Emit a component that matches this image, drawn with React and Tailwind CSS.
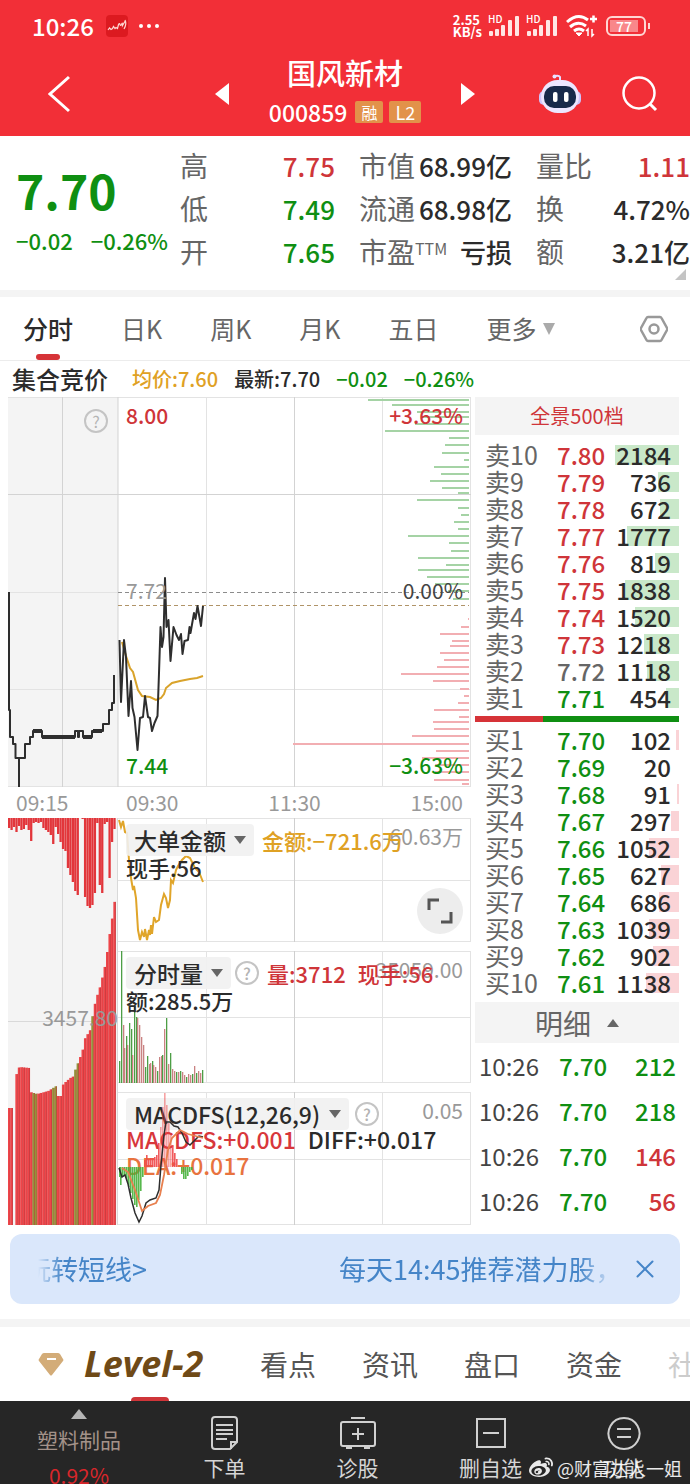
import { X } from 'lucide-react';
import { FaWeibo } from 'react-icons/fa';

const sells = [
  [10, '7.80', 2184], [9, '7.79', 736], [8, '7.78', 672], [7, '7.77', 1777], [6, '7.76', 819],
  [5, '7.75', 1838], [4, '7.74', 1520], [3, '7.73', 1218], [2, '7.72', 1118], [1, '7.71', 454],
];
const buys = [
  [1, '7.70', 102], [2, '7.69', 20], [3, '7.68', 91], [4, '7.67', 297], [5, '7.66', 1052],
  [6, '7.65', 627], [7, '7.64', 686], [8, '7.63', 1039], [9, '7.62', 902], [10, '7.61', 1138],
];
const trades = [
  ['10:26', '7.70', 212, true], ['10:26', '7.70', 218, true],
  ['10:26', '7.70', 146, false], ['10:26', '7.70', 56, false],
];
const PREV_CLOSE = 7.72;

const priceColor = (p) => {
  if (Number(p) > PREV_CLOSE) return 'text-[#cf3539]';
  return Number(p) < PREV_CLOSE ? 'text-[#0f8f12]' : 'text-[#666]';
};

// [y, bar length] of the resting orders at each price
const asks = [
  [400, 101], [405, 77], [412, 52], [417, 48], [424, 54], [431, 84], [438, 20], [445, 24], [453, 27], [460, 5],
  [467, 35], [474, 28], [481, 39], [488, 27], [493, 11], [500, 52], [508, 11], [515, 8], [522, 15], [529, 11],
  [536, 61], [543, 20], [551, 18], [558, 51], [565, 23], [570, 51], [577, 42], [584, 34], [591, 21], [599, 16],
];
const bids = [
  [619, 1], [627, 8], [634, 29], [641, 17], [646, 19], [653, 29], [660, 25], [667, 32], [674, 68], [681, 36],
  [689, 9], [696, 5], [703, 11], [710, 35], [717, 10], [722, 36], [729, 35], [736, 57], [744, 176], [751, 33],
  [758, 47], [765, 34], [772, 34], [780, 35], [784, 7],
];

// outlines of the call auction volume
const auctionTop = [
  [8, 1108], [12, 1108], [13, 1092], [16, 1075], [19, 1067], [29, 1068], [30, 1092], [37, 1094], [48, 1091], [56, 1086],
  [57, 1096], [61, 1096], [63, 1084], [70, 1078], [74, 1076], [75, 1070], [82, 1052], [85, 1038], [90, 1030],
  [93, 1012], [96, 998], [99, 990], [102, 978], [105, 965], [107, 952], [110, 930], [113, 912], [115, 897],
];
const auctionDrop = [
  10, 12, 9, 14, 8, 12, 11, 7, 12, 23, 5, 4, 5, 4, 10, 12, 14, 17, 26, 9, 16, 24, 31, 33, 50, 57, 64, 73, 77, 0, 1, 79,
  88, 90, 87, 75, 5, 67, 75, 6, 4, 60, 24, 11,
];
const greenBars = [10, 11, 18, 19, 27, 28, 34];

const topAt = (x) => {
  const i = auctionTop.findIndex(([px]) => px >= x);
  if (i < 1) return auctionTop[0][1];
  const [x0, y0] = auctionTop[i - 1];
  const [x1, y1] = auctionTop[i];
  return y0 + ((y1 - y0) * (x - x0)) / (x1 - x0);
};

const G = '#4d9e46';
const R = '#c98282';
const volumes = [
  [119, 22, G], [121, 132, G], [123, 58, R], [124, 35, R], [126, 47, G], [127, 38, R], [129, 60, G], [131, 54, G],
  [132, 28, R], [134, 78, G], [136, 66, G], [137, 65, R], [139, 58, R], [141, 46, R], [143, 38, R], [145, 16, G],
  [147, 27, G], [149, 19, R], [150, 20, R], [152, 22, G], [153, 18, R], [155, 16, R], [157, 12, G], [159, 26, R],
  [161, 27, R], [162, 28, G], [164, 54, R], [166, 65, G], [168, 19, R], [170, 30, G], [172, 14, R], [174, 12, R],
  [176, 11, G], [178, 11, R], [180, 12, G], [182, 11, R], [184, 8, R], [186, 6, G], [188, 9, R], [190, 8, R],
  [192, 9, G], [194, 17, R], [196, 10, G], [198, 12, R], [200, 10, R], [202, 13, G],
];
const macd = [
  [120, -10], [121, -18], [123, -10], [125, -9], [127, -14], [129, -20], [131, -26], [133, -32], [135, -38], [137, -40],
  [139, -33], [141, -24], [143, -10], [145, 7], [147, 12], [149, 8], [151, 9], [153, 9], [155, 10], [157, 12],
  [159, 24], [161, 40], [163, 60], [165, 74], [167, 62], [169, 44], [171, 32], [173, 22], [175, 14], [177, 8],
  [182, -7], [184, -12], [186, -12], [188, -9], [190, -5], [192, -3],
];

function Help({ className = '' }) {
  return (
    <button aria-label="帮助"
      className={`flex size-6 shrink-0 items-center justify-center rounded-full border-2 border-[#c4c4c4] text-base leading-none text-[#b4b4b4] ${className}`}>
      ?
    </button>
  );
}

function IndicatorSelect({ name, label }) {
  return (
    <label className="relative flex shrink-0 items-center">
      <select aria-label={label} className="h-8 appearance-none rounded-sm bg-[#f1f1f1]/90 pr-7 pl-2 text-[23px] leading-8">
        <option>{name}</option>
      </select>
      <svg viewBox="0 0 12 8" className="absolute right-2 h-2 w-3 fill-[#666]"><path d="M0 0h12L6 8z" /></svg>
    </label>
  );
}

function Grid({ top, bottom }) {
  const mid = Math.round((top + bottom) / 2) + 0.5;
  return (
    <g stroke="#e3e3e3">
      <path d={`M118 ${top + 0.5}H471M118 ${mid}H471M118 ${bottom - 0.5}H471M206.5 ${top}V${bottom}M382.5 ${top}V${bottom}M470.5 ${top}V${bottom}`} />
      <path d={`M294.5 ${top}V${bottom}`} stroke="#cfcfcf" />
    </g>
  );
}

function Header() {
  return (
    <header className="bg-[#f22f37] text-white">
      {/* Status bar */}
      <div className="flex h-[52px] items-center pr-10 pl-8 text-2xl font-medium">
        <span>10:26</span>
        <svg viewBox="0 0 22 22" className="ml-3 size-[22px]">
          <rect width="22" height="22" rx="4" fill="#dc1a20" />
          <path d="M2 15l1.500-2 1.500 1.500 1.500-1 1-2 1.500 2 1-1 1.500 1 1-4q1-2 1.500 0t1.500 0q1-3 1 1l3-5M19 5q2 4-1 9" fill="none" stroke="#ffd9d4" strokeWidth="1.2" />
        </svg>
        <svg viewBox="0 0 22 6" className="ml-2.5 h-1.5 w-[22px] fill-white">
          <circle cx="3" cy="3" r="2" /><circle cx="11" cy="3" r="2" /><circle cx="19" cy="3" r="2" />
        </svg>
        <div className="ml-auto text-[13px] leading-3 font-bold">
          <p>2.55</p>
          <p>KB/s</p>
        </div>
        {[0, 1].map((n) => (
          <div key={n} className="relative ml-1.5">
            <span className="absolute -top-0.5 left-0 text-[10px] leading-[10px] font-medium">HD</span>
            <svg viewBox="0 0 32 20" className="h-5 w-8 fill-[#ffe6e4]">
              <rect x="1" y="15" width="4" height="5" rx="1" /><rect x="7" y="13" width="4" height="7" rx="1" />
              <rect x="13" y="9" width="4" height="11" rx="1" /><rect x="20" y="4" width="4" height="16" rx="1" />
              <rect x="27" y="0" width="4" height="20" rx="1" />
            </svg>
          </div>
        ))}
        <svg viewBox="0 0 32 24" className="ml-2 h-6 w-8" fill="none" stroke="#fff" strokeWidth="3">
          <path d="M1 8Q12-2 22 6M4 13q8-7 16-1M8 17q5-4 10 0" />
          <path d="M24 5h7M27.500 1.500v7" strokeWidth="2.500" />
          <path d="M13 22l-3-3h6z" fill="#fff" strokeWidth="1" />
          <path d="M22 22v-7l-2 2M26 15v7l2-2" strokeWidth="1.500" />
        </svg>
        <div className="ml-2 flex items-center gap-0.5">
          <span className="flex h-5 w-10 items-center justify-center rounded-md border-2 border-[#ffd6d3]">
            <span className="mr-1 h-3 w-7 bg-[#f9878a] text-center text-sm leading-3">77</span>
          </span>
          <span className="h-1.5 w-0.5 bg-[#ffd6d3]" />
        </div>
      </div>

      {/* Title bar */}
      <div className="grid h-[84px] grid-cols-[1fr_260px_1fr] items-center">
        <button aria-label="返回" className="ml-12 w-6">
          <svg viewBox="0 0 24 38" className="h-[38px] w-6" fill="none" stroke="#fff" strokeWidth="3"><path d="M21 2L2 19l19 17" /></svg>
        </button>
        <div className="flex items-center justify-between">
          <button aria-label="上一只"><svg viewBox="0 0 14 22" className="h-[22px] w-3.5 fill-white"><path d="M14 0v22L0 11z" /></svg></button>
          <div className="pb-1 text-center">
            <h1 className="text-[29px] leading-10 font-medium">国风新材</h1>
            <div className="flex items-center justify-center gap-1.5 text-[23px] leading-10">
              <span className="font-medium">000859</span>
              <span className="ml-0.5 rounded-xs bg-[#e2924a] px-1.5 text-base leading-[22px]">融</span>
              <span className="rounded-xs bg-[#e2924a] px-1.5 text-lg leading-[22px]">L2</span>
            </div>
          </div>
          <button aria-label="下一只"><svg viewBox="0 0 14 22" className="h-[22px] w-3.5 fill-white"><path d="M0 0v22l14-11z" /></svg></button>
        </div>
        <div className="flex items-center justify-end gap-10 pr-8">
          <button aria-label="智能助手">
            <svg viewBox="0 0 44 40" className="h-10 w-11">
              <path d="M22 8V3q-1-2-5-1" fill="none" stroke="#e6dcff" strokeWidth="2" />
              <circle cx="16.500" cy="2.500" r="2" fill="#e9e2ff" />
              <rect x="1" y="17" width="10" height="14" rx="5" fill="#cfc4fb" /><rect x="33" y="17" width="10" height="14" rx="5" fill="#cfc4fb" />
              <rect x="3" y="6" width="38" height="33" rx="16.500" fill="#ece6ff" />
              <rect x="6" y="12" width="32" height="22" rx="10" fill="#17294a" />
              <rect x="15" y="18" width="4.500" height="10" rx="2" fill="#fff" /><rect x="26" y="18" width="4.500" height="10" rx="2" fill="#fff" />
            </svg>
          </button>
          <button aria-label="搜索">
            <svg viewBox="0 0 36 36" className="size-9" fill="none" stroke="#fff" strokeWidth="2.500">
              <circle cx="17" cy="17" r="15.500" /><path d="M28 28l6 6" strokeWidth="3" />
            </svg>
          </button>
        </div>
      </div>
    </header>
  );
}

function Stat({ label, sup, value, color = 'text-[#2b2b2b]' }) {
  return (
    <div className="flex items-center justify-between whitespace-nowrap">
      <dt className="text-[28px] leading-[43px] text-[#666]">{label}{sup && <sup className="text-base">{sup}</sup>}</dt>
      <dd className={`text-[26px] leading-[43px] font-medium ${color}`}>{value}</dd>
    </div>
  );
}

function Quote() {
  return (
    <section className="relative flex h-[161px] border-b-[7px] border-[#f4f4f4] pt-2 text-[#0f8f12]">
      <div className="w-[180px] shrink-0 pl-4">
        <p className="mt-3 text-5xl leading-[66px] font-bold">7.70</p>
        <p className="flex justify-between pr-3 text-[22px] leading-9 font-medium"><span>−0.02</span><span>−0.26%</span></p>
      </div>
      <dl className="grid flex-1 grid-cols-[155px_153px_1fr] content-start gap-x-6">
        <Stat label="高" value="7.75" color="text-[#cf3539]" />
        <Stat label="市值" value="68.99亿" />
        <Stat label="量比" value="1.11" color="text-[#cf3539]" />
        <Stat label="低" value="7.49" color="text-[#0f8f12]" />
        <Stat label="流通" value="68.98亿" />
        <Stat label="换" value="4.72%" />
        <Stat label="开" value="7.65" color="text-[#0f8f12]" />
        <Stat label="市盈" sup="TTM" value="亏损" />
        <Stat label="额" value="3.21亿" />
      </dl>
      <svg viewBox="0 0 11 11" className="absolute right-1 bottom-2.5 size-[11px] fill-[#c4c4c4]"><path d="M11 0v11H0z" /></svg>
    </section>
  );
}

function PeriodTabs() {
  return (
    <nav className="flex h-16 items-center gap-12 border-b border-[#ececec] pr-[22px] pl-[23px] text-[25px] text-[#666]">
      <button className="relative h-full font-medium text-[#2b2b2b]">
        分时
        <span className="absolute bottom-0 left-1/2 h-1.5 w-6 -translate-x-1/2 rounded-full bg-[#d63338]" />
      </button>
      <button>日K</button>
      <button>周K</button>
      <button>月K</button>
      <button>五日</button>
      <button className="flex items-center gap-1.5">
        更多
        <svg viewBox="0 0 12 12" className="size-3 fill-[#aaa]"><path d="M0 0h12L6 12z" /></svg>
      </button>
      <button aria-label="设置" className="ml-auto">
        <svg viewBox="0 0 28 28" className="size-7" fill="none" stroke="#999" strokeWidth="2.500">
          <path d="M8 2h12q1 0 1.500 1L27 13q.5 1 0 2l-5.500 10q-.5 1-1.500 1H8q-1 0-1.500-1L1 15q-.5-1 0-2L6.500 3Q7 2 8 2z" />
          <circle cx="14" cy="14" r="4.500" />
        </svg>
      </button>
    </nav>
  );
}

function PriceChart() {
  return (
    <div className="relative">
      <svg viewBox="8 397 463 390" preserveAspectRatio="none" className="block h-[390px] w-full" fill="none">
        <rect x="8" y="397" width="110" height="390" fill="#f4f4f4" />
        <path d="M8 397.500H471M8 592.500H118M8 689.500H471M8 786.500H471M206.500 397V787M382.500 397V787M470.500 397V787" stroke="#e3e3e3" />
        <path d="M8 494.500H471M62.500 397V787M118 397V787M294.500 397V787" stroke="#d3d3d3" />
        {asks.map(([y, len]) => <rect key={y} x={469 - len} y={y - 1} width={len} height="2" fill="#a5d3a5" />)}
        {bids.map(([y, len]) => <rect key={y} x={469 - len} y={y - 1} width={len} height="2" fill="#f2aeb2" />)}
        <path d="M118 592.500H469" stroke="#8c8c8c" strokeDasharray="4 3" />
        <path d="M118 605.500H469" stroke="#b09468" strokeDasharray="4 3" />
        <path d="M122 642L126 656L130 668L133 672L138 690L142 696L150 697L156 700L161 698L164 694L166 688L172 683L180 681L190 679L197 678L203 676"
          stroke="#d9a32b" strokeWidth="2" />
        <g stroke="#2e2e2e" strokeWidth="2" strokeLinejoin="round">
          <path d="M9 592V710H10V737H13V744H15.500V758H19V787V758H25V744H30V737H33V731H42V737H75V731H78V737H79V731H83V737H92V731H103V724H109V710H112V703H114V675" />
          <path d="M42 737H75M83 737H92M93 731H102M33 731H42" strokeWidth="4" />
          <path d="M119.500 640L121 702L124 640L126 657L128.500 716L131 681L132.500 708L134.500 717L137.500 750L140 718L143 717L145 696L148 717L150 718L152 731L154.500 723L157.500 716L159 673L160.500 627L162 647L163.500 637L165 578L166.500 627L168.500 620L170.500 661L173.500 627L176.500 635L179 640L181 634L182.500 654L184.500 641L188 640L189.500 627L190.500 633L194 613L195.500 619L197.500 606L201 626L203 606" />
        </g>
      </svg>
      <Help className="absolute top-3 left-[76px]" />
      <div className="absolute inset-y-0 right-2 left-[118px] flex justify-between text-[21px] leading-8 font-medium">
        <div className="flex flex-col justify-between pt-0.5 pb-1.5">
          <span className="text-[#cf3539]">8.00</span>
          <span className="font-normal text-[#999]">7.72</span>
          <span className="text-[#0f8f12]">7.44</span>
        </div>
        <div className="flex flex-col justify-between pt-0.5 pb-1.5 text-right">
          <span className="text-[#cf3539]">+3.63%</span>
          <span className="font-normal text-[#444]">0.00%</span>
          <span className="text-[#0f8f12]">−3.63%</span>
        </div>
      </div>
    </div>
  );
}

function AuctionVolume() {
  return (
    <div className="relative w-[110px] shrink-0">
      <svg viewBox="8 818 110 407" preserveAspectRatio="none" className="block h-[407px] w-full">
        <rect x="8" y="818" width="110" height="407" fill="#f4f4f4" />
        <path d="M62.500 818V1225M8 1021.500H118M117.500 818V1225" stroke="#d9d9d9" />
        {auctionDrop.map((h, i) => {
          const x = 8 + i * 2.45;
          const top = topAt(x + 1);
          return (
            <g key={i} fill="#e2363b">
              <rect x={x} y="818" width="2.300" height={h} />
              {i !== 2 && <rect x={x} y={top} width="2.450" height={1225 - top} fill={greenBars.includes(i) ? '#94923a' : '#ee4549'} />}
              {i !== 2 && <rect x={x + 1.8} y={top} width=".6" height={1225 - top} fill="#b8383c" />}
            </g>
          );
        })}
      </svg>
      <span className="absolute top-[183px] right-0 text-[21px] leading-8 text-[#999]">3457.80</span>
    </div>
  );
}

function LargeOrders() {
  return (
    <div className="relative">
      <svg viewBox="118 818 353 124" preserveAspectRatio="none" className="block h-[124px] w-full" fill="none">
        <Grid top={818} bottom={942} />
        <path d="M119 820L121 827L123 821L125 832L127 833L129 860L131 878L133 890L134 886L136 898L138 930L140 940L142 932L144 937L145 929L147 940L149 930L150 935L151 925L152 934L154 917L156 922L159 920L161 905L164 894L166 898L168 908L170 900L171 880L173 883L176 870L178 866L182 860L186 856L190 858L195 868L199 872L203 882"
          stroke="#e0a52a" strokeWidth="2" />
      </svg>
      <span className="absolute top-0.5 right-2 text-[21px] leading-8 text-[#999]">-60.63万</span>
      <div className="absolute top-1.5 left-2 text-[22px] leading-[22px] font-medium">
        <div className="flex items-center gap-2">
          <IndicatorSelect name="大单金额" label="副图指标一" />
          <span className="text-[#dfa124]">金额:−721.6万</span>
        </div>
        <p>现手:56</p>
      </div>
      <button aria-label="全屏" className="absolute right-2 bottom-2 flex size-[46px] items-center justify-center rounded-full bg-[#ededed]">
        <svg viewBox="0 0 26 26" className="size-[26px]" fill="none" stroke="#555" strokeWidth="3"><path d="M2 12V2h10M24 14v10H14" /></svg>
      </button>
    </div>
  );
}

function Volume() {
  return (
    <div className="relative">
      <svg viewBox="118 951 353 132" preserveAspectRatio="none" className="block h-[132px] w-full">
        <Grid top={951} bottom={1083} />
        {volumes.map(([x, h, c]) => <rect key={x} x={x} y={1083 - h} width="1.300" height={h} fill={c} />)}
      </svg>
      <span className="absolute top-0.5 right-2 text-[21px] leading-8 text-[#999]">35059.00</span>
      <div className="absolute top-1.5 left-2 text-[22px] leading-[22px] font-medium">
        <div className="flex items-center text-[#cf3539]">
          <span className="text-[#2b2b2b]"><IndicatorSelect name="分时量" label="副图指标二" /></span>
          <Help className="mr-2 ml-1" />
          <span className="mr-3">量:3712</span>
          <span>现手:56</span>
        </div>
        <p>额:285.5万</p>
      </div>
    </div>
  );
}

function Macd() {
  return (
    <div className="relative">
      <svg viewBox="118 1092 353 133" preserveAspectRatio="none" className="block h-[133px] w-full" fill="none">
        <Grid top={1092} bottom={1225} />
      </svg>
      <span className="absolute top-0.5 right-2 text-[21px] leading-8 text-[#999]">0.05</span>
      <div className="absolute top-1.5 left-2 text-[22px] leading-[26px] font-medium whitespace-nowrap">
        <div className="flex items-center gap-1.5">
          <IndicatorSelect name="MACDFS(12,26,9)" label="副图指标三" />
          <Help />
        </div>
        <p className="-mt-1 flex gap-5 text-[23px]"><span className="text-[#d8373b]">MACDFS:+0.001</span><span className="-ml-2">DIFF:+0.017</span></p>
        <p className="text-[23px] text-[#e8733f]">DEA:+0.017</p>
      </div>
      <svg viewBox="118 1092 353 133" preserveAspectRatio="none" className="pointer-events-none absolute inset-0 h-full w-full" fill="none">
        {macd.map(([x, v]) => (
          <rect key={x} x={x - 1} y={v > 0 ? 1167 - v : 1167} width="1.600" height={Math.abs(v)} fill={v > 0 ? '#f0484a' : '#45b03a'} fillOpacity={v > 30 ? 0.5 : 0.9} />
        ))}
        <path d="M119 1168L122 1177L125 1175L128 1184L131 1198L135 1213L139 1222L142 1216L146 1203L150 1200L156 1198L159 1190L161 1165L164 1135L166 1122L170 1122L174 1126L178 1127L182 1133L186 1142L190 1145L195 1140L199 1136L203 1137"
          stroke="#2e2e2e" strokeWidth="1.500" />
        <path d="M122 1168L128 1172L135 1190L142 1211L148 1206L156 1203L160 1195L164 1175L168 1150L172 1138L180 1130L188 1134L203 1138" stroke="#e8804f" strokeWidth="1.800" />
      </svg>
    </div>
  );
}

function BookSide({ side, rows, barClass }) {
  return (
    <table className="w-full table-fixed text-2xl leading-[27px] font-medium text-[#2b2b2b]">
      <tbody>
        {rows.map(([level, price, qty]) => (
          <tr key={level} className="h-[27px]">
            <th scope="row" className="w-[82px] pl-2.5 text-left text-[25px] font-normal text-[#666]">{side}{level}</th>
            <td className={priceColor(price)}>{price}</td>
            <td className="relative w-[70px] pr-2 text-right">
              <span className={`absolute top-1 right-0 h-5 ${barClass}`} style={{ width: Math.floor(qty / 34) }} />
              <span className="relative">{qty}</span>
            </td>
          </tr>
        ))}
      </tbody>
    </table>
  );
}

function OrderBook() {
  return (
    <aside className="w-[204px] shrink-0">
      <button className="mb-1.5 h-[38px] w-full bg-[#f4f4f4] text-xl text-[#cf3539]">全景500档</button>
      <BookSide side="卖" rows={sells} barClass="bg-[#c9e8c9]" />
      <div className="mt-[5px] mb-1 flex h-1.5 bg-[#0f8f12]"><span className="w-1/3 bg-[#d63338]" /></div>
      <BookSide side="买" rows={buys} barClass="bg-[#fad3d6]" />
      <button className="mt-1.5 flex h-[41px] w-full items-center justify-center gap-4 bg-[#f4f4f4] text-[28px] text-[#666]">
        明细
        <svg viewBox="0 0 12 8" className="h-2 w-3 fill-[#666]"><path d="M0 8h12L6 0z" /></svg>
      </button>
      <table className="w-full text-2xl font-medium">
        <tbody>
          {trades.map(([time, price, qty, sell], i) => (
            <tr key={i} className="h-[45px]">
              <td className="w-[84px] pl-1 font-normal text-[#444]">{time}</td>
              <td className={priceColor(price)}>{price}</td>
              <td className={`pr-[3px] text-right ${sell ? 'text-[#0f8f12]' : 'text-[#cf3539]'}`}>{qty}</td>
            </tr>
          ))}
        </tbody>
      </table>
    </aside>
  );
}

function InfoTabs() {
  return (
    <nav className="flex h-[82px] items-center gap-[46px] overflow-hidden border-t-8 border-[#f4f4f4] pl-[38px] text-[28px] whitespace-nowrap text-[#555]">
      <a href="#level2" className="relative flex h-full items-center gap-5">
        <svg viewBox="0 0 26 24" className="h-6 w-[26px]">
          <path d="M6 1h14q1 0 2 1l3 5q1 1 0 2L14 23q-1 1-2 0L1 9Q0 8 1 7l3-5q1-1 2-1z" fill="#d3ac78" />
          <path d="M9 7h9" stroke="#fff" strokeWidth="2" />
        </svg>
        <span className="w-[130px] font-['Open_Sans','Noto_Sans_CJK_SC',sans-serif] text-4xl font-bold text-[#6f4a17] italic">Level-2</span>
        <span className="absolute bottom-0 left-[93px] h-1 w-[38px] rounded-t-md bg-[#cf3539]" />
      </a>
      <a href="#views">看点</a>
      <a href="#news">资讯</a>
      <a href="#depth">盘口</a>
      <a href="#funds">资金</a>
      <a href="#community" className="text-[#ccc]">社区</a>
    </nav>
  );
}

const actions = [
  { label: '下单', icon: <path d="M8 2h19q3 0 3 3v22l-7 7H8q-3 0-3-3V5q0-3 3-3zM9 10h17M9 15h17M9 19h17M9 24h11M30 27h-6v7" /> },
  { label: '诊股', icon: <path d="M11 3h14M3 7h30q2 0 2 2v20q0 2-2 2H3q-2 0-2-2V9q0-2 2-2zM18 13v12M12 19h12M6 33h6M24 33h6" /> },
  { label: '删自选', icon: <path d="M4 4h28v28H4zM10 18h16" /> },
  { label: '功能', icon: <path d="M18 3a15.500 15.500 0 1 0 .01 0zM11 14h14M11 22h14" /> },
];

function BottomBar() {
  return (
    <footer className="relative flex h-[83px] overflow-hidden bg-[#262626] text-[21px] whitespace-nowrap text-[#d5d5d5]">
      <button className="flex h-24 w-[158px] flex-col items-center pt-2 text-[#a39289]">
        <svg viewBox="0 0 16 10" className="h-2.5 w-4 shrink-0 fill-[#b5b5b5]"><path d="M0 10h16L8 0z" /></svg>
        <span className="mt-1 leading-8">塑料制品</span>
        <span className="mt-1 leading-8 text-[#d8262b]">0.92%</span>
      </button>
      {actions.map((a) => (
        <button key={a.label} className="flex flex-1 flex-col items-center pt-3.5">
          <svg viewBox="0 0 36 36" className="size-9 shrink-0" fill="none" stroke="#d0d0d0" strokeWidth="2">{a.icon}</svg>
          <span className="leading-8">{a.label}</span>
        </button>
      ))}
      {/* Watermark */}
      <p className="absolute right-2 bottom-1 flex items-center gap-1 text-lg leading-6 text-white/90">
        <FaWeibo size={24} />@财富达人一姐
      </p>
    </footer>
  );
}

export default function App() {
  return (
    <div className="overflow-hidden bg-white font-['Noto_Sans_CJK_SC',sans-serif] text-[#2b2b2b]">
      <Header />
      <Quote />
      <main>
        <PeriodTabs />
        <div className="flex h-9 items-center pl-3 text-xl font-medium whitespace-nowrap text-[#0f8f12]">
          <span className="mr-6 text-2xl text-[#2b2b2b]">集合竞价</span>
          <span className="mr-4 text-[#dfa124]">均价:7.60</span>
          <span className="mr-4 text-[#2b2b2b]">最新:7.70</span>
          <span className="mr-4">−0.02</span>
          <span>−0.26%</span>
        </div>
        <div className="flex gap-1 pr-[11px] pl-2">
          <div className="min-w-0 flex-1">
            <PriceChart />
            <div className="flex h-[31px] items-center text-[21px] text-[#999]">
              <span className="w-[110px] pl-2">09:15</span>
              <div className="flex flex-1 justify-between px-2"><span>09:30</span><span>11:30</span><span>15:00</span></div>
            </div>
            <div className="flex">
              <AuctionVolume />
              <div className="flex min-w-0 flex-1 flex-col gap-[9px]">
                <LargeOrders />
                <Volume />
                <Macd />
              </div>
            </div>
          </div>
          <OrderBook />
        </div>
        {/* Promo ticker */}
        <div className="mx-2.5 mt-[9px] mb-[15px] flex h-[70px] items-center rounded-xl bg-[#dae7fb] pr-5 pl-7 text-[#4585c8]">
          <div className="min-w-0 flex-1 overflow-hidden [mask-image:linear-gradient(to_right,transparent,#000_24px,#000_94%,transparent)]">
            <a href="#promo" className="-ml-3.5 flex gap-48 text-[27px] leading-10 whitespace-nowrap">
              <span>玩转短线&gt;</span>
              <span>每天14:45推荐潜力股，</span>
            </a>
          </div>
          <button aria-label="关闭" className="ml-4"><X size={30} strokeWidth={1.6} /></button>
        </div>
        <InfoTabs />
      </main>
      <BottomBar />
    </div>
  );
}
